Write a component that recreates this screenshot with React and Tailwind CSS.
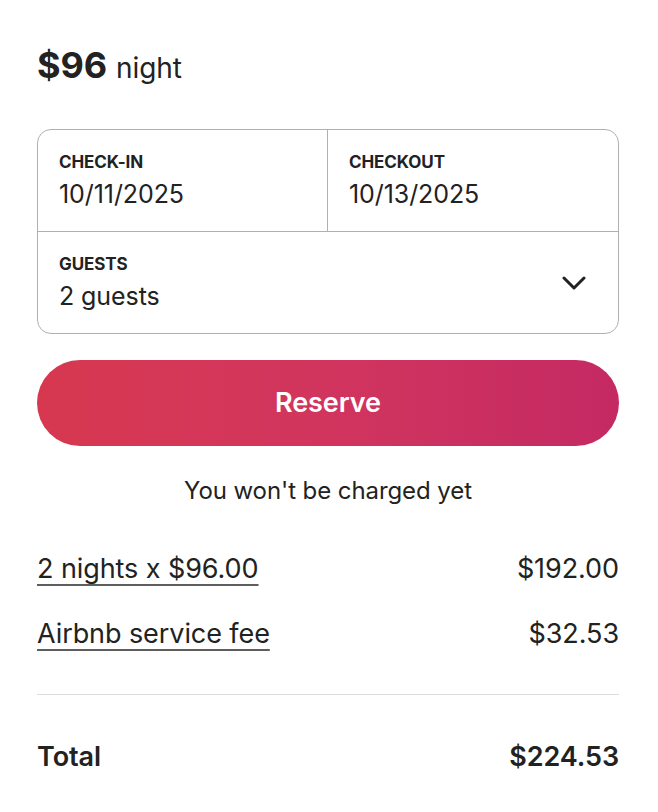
import React from 'react';

function Field({ label, value, className = '' }) {
  return (
    <div className={`px-[21px] pt-[22px] pb-[22px] ${className}`}>
      <div className="text-[17px] font-bold uppercase leading-[20px] text-[#222]">{label}</div>
      <div className="mt-[7px] text-[25px] leading-[30px] text-[#222]">{value}</div>
    </div>
  );
}

function PriceRow({ label, amount }) {
  return (
    <div className="flex items-center justify-between text-[27px] leading-[32px] text-[#222]">
      <span className="underline decoration-[#5e5e5e] decoration-[1.5px] underline-offset-[6px]">{label}</span>
      <span>{amount}</span>
    </div>
  );
}

export default function App() {
  return (
    <div className="min-h-screen bg-white" style={{ fontFamily: 'Inter, "Noto Sans", sans-serif' }}>
      <div className="pl-[37px] pr-[39px] pt-[42px] pb-[36px] text-[#222] tracking-[-0.005em]">
        <div className="flex items-baseline gap-[9px]">
          <span className="text-[36px] font-bold leading-[46px]">$96</span>
          <span className="text-[28px] leading-[32px]">night</span>
        </div>

        <div className="mt-[41px] rounded-[14px] border border-[#b0b0b0]">
          <div className="grid grid-cols-2 border-b border-[#b0b0b0]">
            <Field label="Check-in" value="10/11/2025" className="border-r border-[#b0b0b0]" />
            <Field label="Checkout" value="10/13/2025" />
          </div>
          <div className="flex items-center justify-between pr-[32px]">
            <Field label="Guests" value="2 guests" />
            <svg width="24" height="14" viewBox="0 0 24 14" fill="none" stroke="#222" strokeWidth="3" strokeLinecap="round" strokeLinejoin="round">
              <path d="M2 2l10 10L22 2" />
            </svg>
          </div>
        </div>

        <button className="mt-[26px] flex h-[86px] w-full items-center justify-center rounded-full bg-gradient-to-r from-[#d7384f] via-[#d1355e] to-[#c42963] text-[27px] font-semibold text-white">
          Reserve
        </button>

        <p className="mt-[30px] text-center text-[24px] leading-[30px]">You won't be charged yet</p>

        <div className="mt-[47px] flex flex-col gap-[33px]">
          <PriceRow label="2 nights x $96.00" amount="$192.00" />
          <PriceRow label="Airbnb service fee" amount="$32.53" />
        </div>

        <div className="mt-[44px] border-t border-[#dddddd]" />

        <div className="mt-[46px] flex items-center justify-between text-[27px] font-semibold leading-[32px]">
          <span>Total</span>
          <span>$224.53</span>
        </div>
      </div>
    </div>
  );
}
